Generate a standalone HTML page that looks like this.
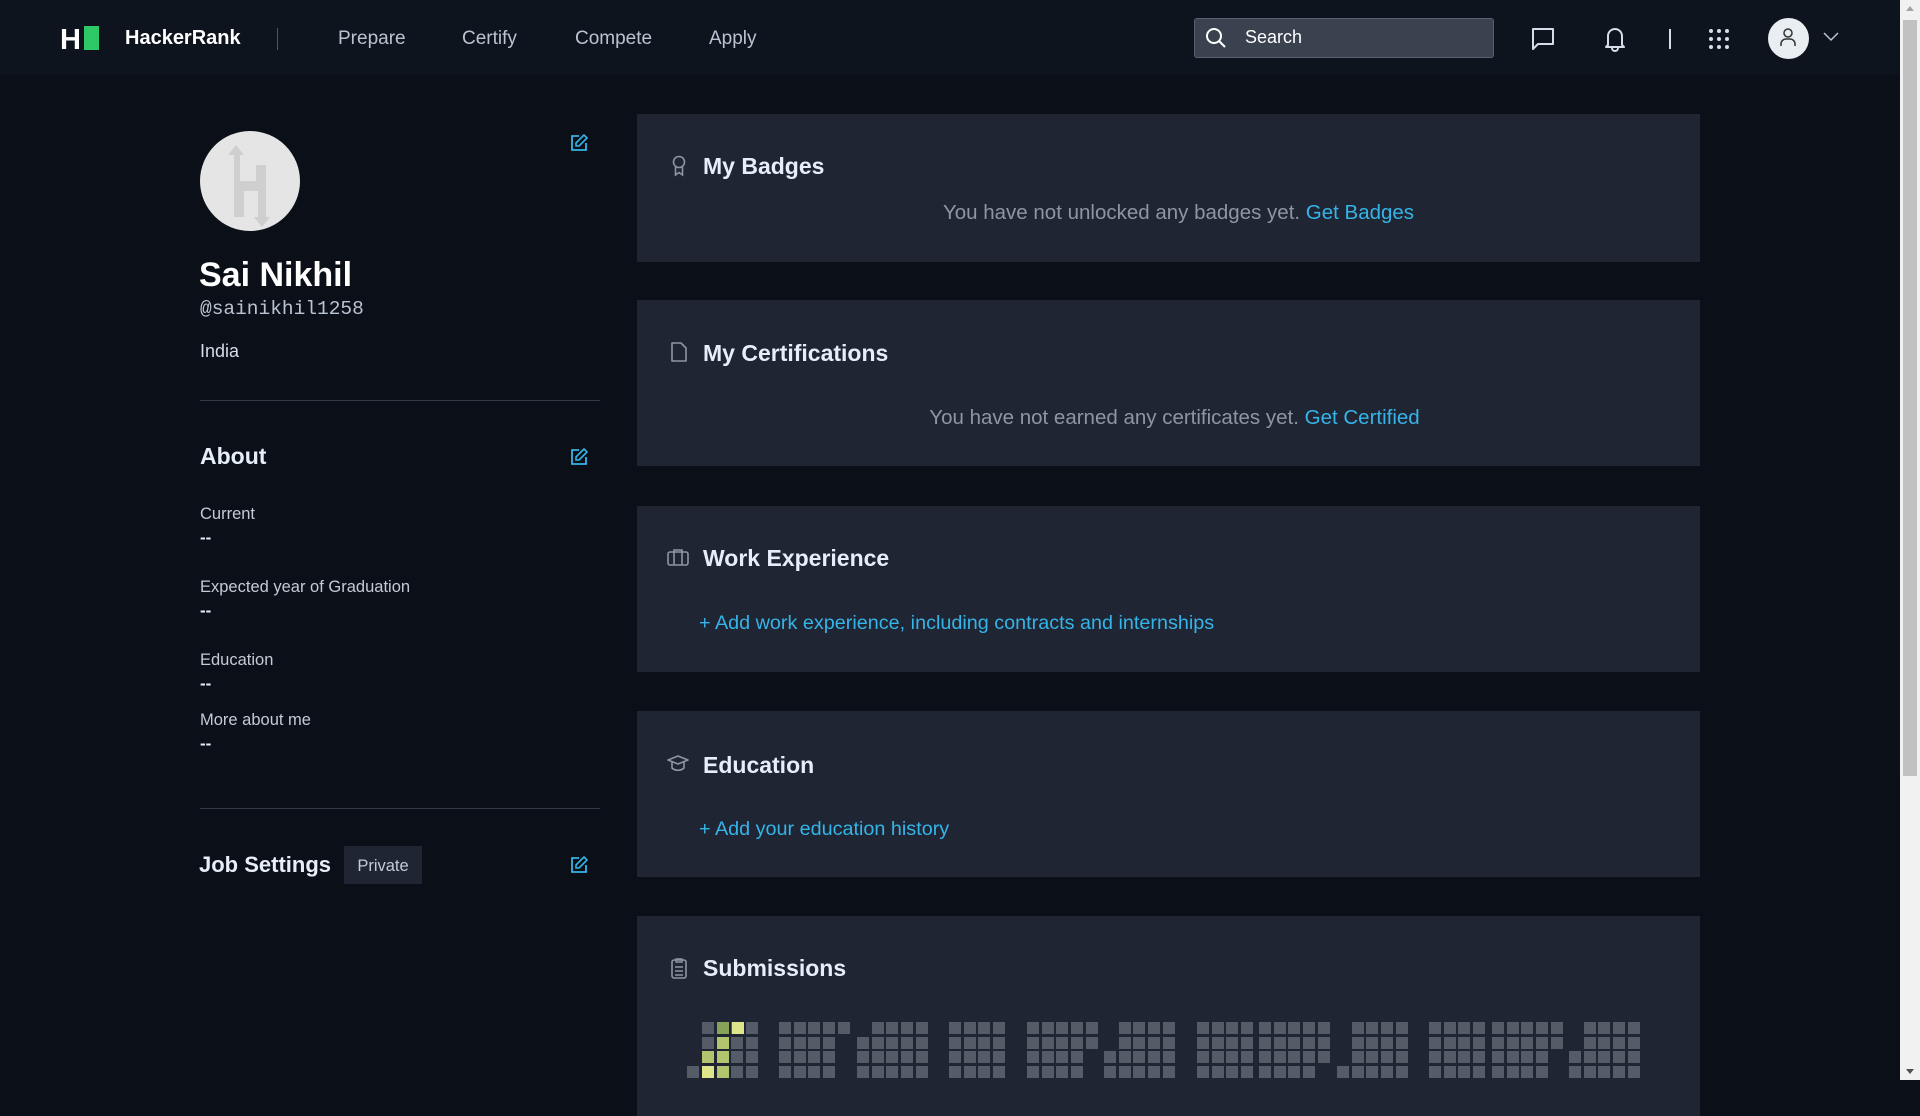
<!DOCTYPE html>
<html><head><meta charset="utf-8">
<style>
*{margin:0;padding:0;box-sizing:border-box}
body{width:1920px;height:1080px;overflow:hidden;background:#0b0f18;font-family:"Liberation Sans",sans-serif;position:relative;color:#e6eefa}
.a{position:absolute;white-space:nowrap}
.nav{position:absolute;left:0;top:0;width:1900px;height:75px;background:#0e141e}
.navl{font-size:19px;color:#b9c3d1;top:28px}
.card{position:absolute;left:637px;width:1063px;background:#1f2533}
.ct{position:absolute;left:66px;font-size:23px;font-weight:bold;color:#e6eefa}
.ci{position:absolute;left:32px}
.msg{position:absolute;left:0;width:100%;text-align:center;font-size:20.5px;color:#8d96a4}
.lnk{color:#35b4e8}
.lab{font-size:16.5px;color:#c3cbd6;left:200px}
.dash{font-size:17px;color:#e6eefa;left:200px;font-weight:bold}
.sb{position:absolute;left:1900px;top:0;width:20px;height:1080px;background:#f1f1f1}
.cell{position:absolute;width:12px;height:12px;background:#555b67}
</style></head><body>
<div class="nav"></div>
<div class="a" style="left:60px;top:25px;font-size:29px;font-weight:bold;color:#fff;line-height:30px;letter-spacing:-1px">H</div>
<div class="a" style="left:84px;top:26px;width:15px;height:24px;background:#2ec866"></div>
<div class="a" style="left:125px;top:27px;font-size:20px;font-weight:bold;color:#fff">HackerRank</div>
<div class="a" style="left:277px;top:28px;width:1px;height:22px;background:#555"></div>
<div class="a navl" style="left:338px">Prepare</div>
<div class="a navl" style="left:462px">Certify</div>
<div class="a navl" style="left:575px">Compete</div>
<div class="a navl" style="left:709px">Apply</div>
<div class="a" style="left:1194px;top:18px;width:300px;height:40px;background:#39424e;border:1px solid #576170;border-radius:3px"></div>
<svg class="a" style="left:1205px;top:27px" width="22" height="22" viewBox="0 0 22 22"><circle cx="9" cy="9" r="7" fill="none" stroke="#fff" stroke-width="2"/><path d="M14 14l6 6" stroke="#fff" stroke-width="2"/></svg>
<div class="a" style="left:1245px;top:27px;font-size:18px;color:#fff">Search</div>
<svg class="a" style="left:1530px;top:27px" width="26" height="24" viewBox="0 0 26 24"><path d="M3 2h20v15H8l-5 5z" fill="none" stroke="#d4dde8" stroke-width="2" stroke-linejoin="round"/></svg>
<svg class="a" style="left:1603px;top:25px" width="24" height="27" viewBox="0 0 24 27"><path d="M5 20V11a7 7 0 0 1 14 0v9l2 2H3z" fill="none" stroke="#d4dde8" stroke-width="2" stroke-linejoin="round"/><path d="M9 23a3 3 0 0 0 6 0" fill="none" stroke="#d4dde8" stroke-width="2"/></svg>
<div class="a" style="left:1669px;top:29px;width:2px;height:20px;background:#d4dde8"></div>
<svg class="a" style="left:1708px;top:28px" width="22" height="22" viewBox="0 0 22 22" fill="#d4dde8"><circle cx="3" cy="3" r="2"/><circle cx="11" cy="3" r="2"/><circle cx="19" cy="3" r="2"/><circle cx="3" cy="11" r="2"/><circle cx="11" cy="11" r="2"/><circle cx="19" cy="11" r="2"/><circle cx="3" cy="19" r="2"/><circle cx="11" cy="19" r="2"/><circle cx="19" cy="19" r="2"/></svg>
<div class="a" style="left:1768px;top:18px;width:41px;height:41px;border-radius:50%;background:#e8eef2"></div>
<svg class="a" style="left:1778px;top:27px" width="20" height="22" viewBox="0 0 20 22"><circle cx="10" cy="6" r="4" fill="none" stroke="#333" stroke-width="1.5"/><path d="M3 19v-2a5 5 0 0 1 5-5h4a5 5 0 0 1 5 5v2" fill="none" stroke="#333" stroke-width="1.5"/></svg>
<svg class="a" style="left:1823px;top:32px" width="16" height="10" viewBox="0 0 16 10"><path d="M1 1l7 7 7-7" fill="none" stroke="#b9c3d1" stroke-width="1.5"/></svg>

<div class="a" style="left:200px;top:131px;width:100px;height:100px;border-radius:50%;background:#e5e5e5"></div>
<svg class="a" style="left:200px;top:131px" width="100" height="100" viewBox="0 0 100 100"><path d="M28 24l8-10 8 10h-4v26h16V34h10v52h4l-8 10-8-10h4V60H44v26H34V24z" fill="#cfcfcf"/></svg>
<svg class="a" style="left:570px;top:134px" width="18" height="18" viewBox="0 0 18 18"><path d="M9 2H2v14h14V9" fill="none" stroke="#35b4e8" stroke-width="1.8"/><path d="M14 1l3 3-8 8H6V9z" fill="none" stroke="#35b4e8" stroke-width="1.6" stroke-linejoin="round"/></svg>
<div class="a" style="left:199px;top:256px;font-size:34px;font-weight:bold;color:#fff">Sai Nikhil</div>
<div class="a" style="left:200px;top:298px;font-size:19.5px;font-family:'Liberation Mono',monospace;color:#b9c3d1">@sainikhil1258</div>
<div class="a" style="left:200px;top:341px;font-size:18px;color:#d4dde8">India</div>
<div class="a" style="left:200px;top:400px;width:400px;height:1px;background:#343b47"></div>
<div class="a" style="left:200px;top:443px;font-size:23px;font-weight:bold">About</div>
<svg class="a" style="left:570px;top:448px" width="18" height="18" viewBox="0 0 18 18"><path d="M9 2H2v14h14V9" fill="none" stroke="#35b4e8" stroke-width="1.8"/><path d="M14 1l3 3-8 8H6V9z" fill="none" stroke="#35b4e8" stroke-width="1.6" stroke-linejoin="round"/></svg>
<div class="a lab" style="top:505px">Current</div><div class="a dash" style="top:528px">--</div>
<div class="a lab" style="top:578px">Expected year of Graduation</div><div class="a dash" style="top:601px">--</div>
<div class="a lab" style="top:651px">Education</div><div class="a dash" style="top:674px">--</div>
<div class="a lab" style="top:711px">More about me</div><div class="a dash" style="top:734px">--</div>
<div class="a" style="left:200px;top:808px;width:400px;height:1px;background:#343b47"></div>
<div class="a" style="left:199px;top:852px;font-size:22px;font-weight:bold">Job Settings</div>
<div class="a" style="left:344px;top:846px;width:78px;height:38px;background:#1f2533;color:#c3cbd6;font-size:16.5px;text-align:center;line-height:40px">Private</div>
<svg class="a" style="left:570px;top:856px" width="18" height="18" viewBox="0 0 18 18"><path d="M9 2H2v14h14V9" fill="none" stroke="#35b4e8" stroke-width="1.8"/><path d="M14 1l3 3-8 8H6V9z" fill="none" stroke="#35b4e8" stroke-width="1.6" stroke-linejoin="round"/></svg>

<div class="card" style="top:114px;height:148px">
<svg class="ci" style="top:41px;left:34px" width="16" height="22" viewBox="0 0 16 22"><circle cx="8" cy="7" r="5.5" fill="none" stroke="#8d96a4" stroke-width="1.6"/><path d="M4.5 12v8l3.5-2.5 3.5 2.5v-8" fill="none" stroke="#8d96a4" stroke-width="1.6"/></svg>
<div class="ct" style="top:39px">My Badges</div>
<div class="msg" style="top:87px;padding-left:20px">You have not unlocked any badges yet. <span class="lnk">Get Badges</span></div>
</div>
<div class="card" style="top:300px;height:166px">
<svg class="ci" style="top:42px;left:34px" width="16" height="20" viewBox="0 0 16 20"><path d="M1 1h9l5 5v13H1z" fill="none" stroke="#8d96a4" stroke-width="1.6" stroke-linejoin="round"/></svg>
<div class="ct" style="top:40px">My Certifications</div>
<div class="msg" style="top:106px;padding-left:12px">You have not earned any certificates yet. <span class="lnk">Get Certified</span></div>
</div>
<div class="card" style="top:506px;height:166px">
<svg class="ci" style="top:42px;left:30px" width="22" height="18" viewBox="0 0 22 18"><rect x="1" y="4" width="20" height="13" rx="2" fill="none" stroke="#8d96a4" stroke-width="1.6"/><path d="M7 17V2h8v15" fill="none" stroke="#8d96a4" stroke-width="1.6"/></svg>
<div class="ct" style="top:39px">Work Experience</div>
<div class="a lnk" style="left:62px;top:106px;font-size:19.8px">+ Add work experience, including contracts and internships</div>
</div>
<div class="card" style="top:711px;height:166px">
<svg class="ci" style="top:43px;left:30px" width="22" height="18" viewBox="0 0 22 18"><path d="M1 6l10-4 10 4-10 4z" fill="none" stroke="#8d96a4" stroke-width="1.6" stroke-linejoin="round"/><path d="M5 8v6c3 3 9 3 12 0V8" fill="none" stroke="#8d96a4" stroke-width="1.6"/></svg>
<div class="ct" style="top:41px">Education</div>
<div class="a lnk" style="left:62px;top:107px;font-size:19.8px">+ Add your education history</div>
</div>
<div class="card" style="top:916px;height:200px">
<svg class="ci" style="top:41px;left:34px" width="16" height="22" viewBox="0 0 16 22"><rect x="1" y="3" width="14" height="18" rx="2" fill="none" stroke="#8d96a4" stroke-width="1.6"/><path d="M5 2h6v3H5zM4 10h8M4 14h8M4 18h8" fill="none" stroke="#8d96a4" stroke-width="1.4"/></svg>
<div class="ct" style="top:39px">Submissions</div>
</div>
<div class="sb"></div>
<div class="a" style="left:1903px;top:20px;width:14px;height:756px;background:#c1c1c1"></div>
<svg class="a" style="left:1905px;top:4px" width="10" height="8"><path d="M1 7l4-5 4 5z" fill="#a3a3a3"/></svg>
<svg class="a" style="left:1905px;top:1068px" width="10" height="8"><path d="M1 1l4 5 4-5z" fill="#505050"/></svg>
<script>
var m=[[702,[4,4,4,4]],[779,[5,4,4,4]],[857,[[1,4],5,5,5]],[949,[4,4,4,4]],[1027,[5,5,4,4]],[1104,[[1,4],[1,4],5,5]],[1197,[4,4,4,4]],[1259,[5,5,5,4]],[1337,[[1,4],[1,4],[1,4],5]],[1429,[4,4,4,4]],[1492,[5,5,4,4]],[1569,[[1,4],[1,4],5,5]]];
var P=14.7,h='';
m.forEach(function(g){g[1].forEach(function(r,ri){var s=0,n=r;if(Array.isArray(r)){s=r[0];n=r[1];}for(var c=s;c<s+n;c++){h+='<div class="cell" style="left:'+Math.round(g[0]+c*P)+'px;top:'+Math.round(1022+ri*14.7)+'px"></div>';}});});
h+='<div class="cell" style="left:687px;top:1066px"></div>';
var gr=[[717,1022,'#87a358'],[732,1022,'#dde68a'],[717,1037,'#b3c46e'],[702,1051,'#b3c46e'],[717,1051,'#b3c46e'],[702,1066,'#dde68a'],[717,1066,'#b3c46e']];
gr.forEach(function(g){h+='<div class="cell" style="left:'+g[0]+'px;top:'+g[1]+'px;background:'+g[2]+'"></div>';});
document.body.insertAdjacentHTML('beforeend',h);
</script>
</body></html>
